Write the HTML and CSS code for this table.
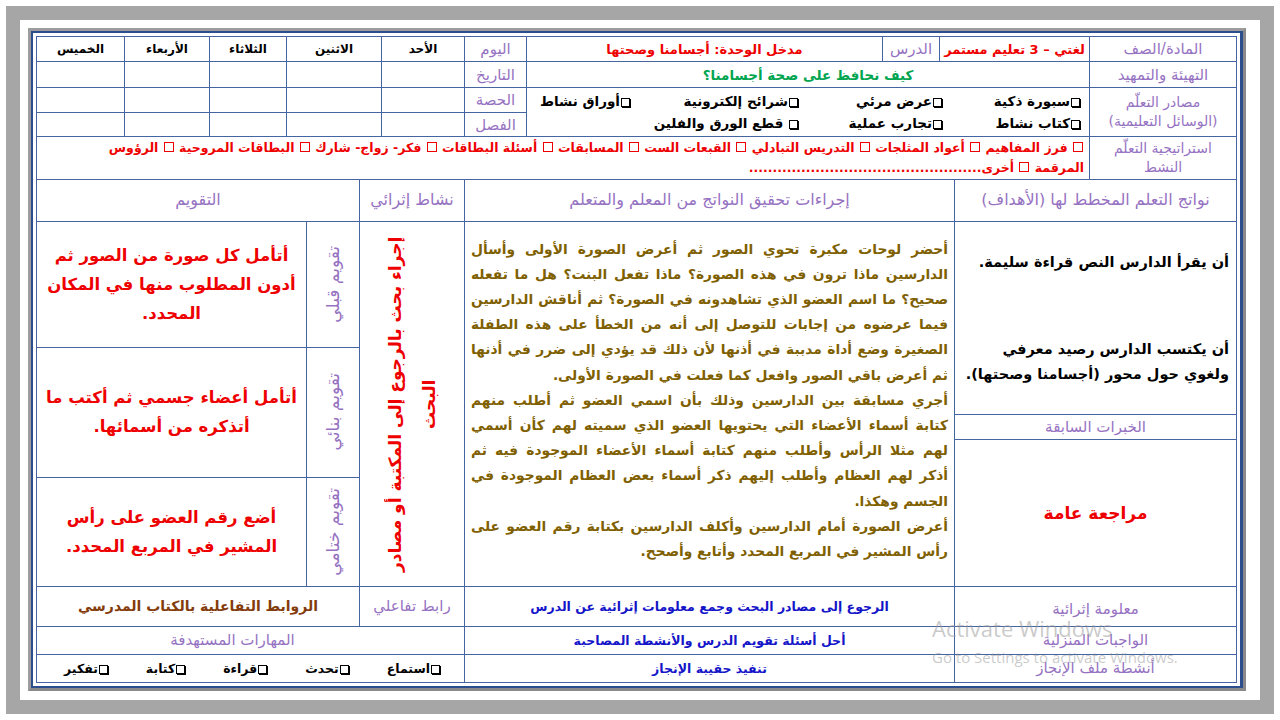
FILE: index.html
```html
<!DOCTYPE html>
<html lang="ar" dir="rtl">
<head>
<meta charset="utf-8">
<link rel="stylesheet" href="styles.css">
</head>
<body>
<div class="page">
  <div class="panel">
    <div class="frame">
      <div class="inner">
        <table class="top">
          <colgroup>
            <col class="c147"><col class="c150"><col class="c57"><col class="c356"><col class="c62">
            <col class="c83"><col class="c95"><col class="c77"><col class="c85"><col class="c88">
          </colgroup>
          <tr class="r25">
            <td class="lbl">المادة/الصف</td>
            <td class="red b">لغتي – 3 تعليم مستمر</td>
            <td class="lbl">الدرس</td>
            <td class="red b">مدخل الوحدة: أجسامنا وصحتها</td>
            <td class="lbl">اليوم</td>
            <td class="day">الأحد</td>
            <td class="day">الاثنين</td>
            <td class="day">الثلاثاء</td>
            <td class="day">الأربعاء</td>
            <td class="day">الخميس</td>
          </tr>
          <tr class="r26">
            <td class="lbl">التهيئة والتمهيد</td>
            <td colspan="3" class="green b">كيف نحافظ على صحة أجسامنا؟</td>
            <td class="lbl">التاريخ</td>
            <td></td><td></td><td></td><td></td><td></td>
          </tr>
          <tr class="r25">
            <td rowspan="2" class="lbl two">مصادر التعلّم<br>(الوسائل التعليمية)</td>
            <td rowspan="2" colspan="3" class="res">
              <div class="resgrid">
                <span><i class="cb"></i>سبورة ذكية</span>
                <span><i class="cb"></i>عرض مرئي</span>
                <span><i class="cb"></i>شرائح إلكترونية</span>
                <span><i class="cb"></i>أوراق نشاط</span>
                <span><i class="cb"></i>كتاب نشاط</span>
                <span><i class="cb"></i>تجارب عملية</span>
                <span><i class="cb"></i> قطع الورق والفلين</span>
              </div>
            </td>
            <td class="lbl">الحصة</td>
            <td></td><td></td><td></td><td></td><td></td>
          </tr>
          <tr class="r24">
            <td class="lbl">الفصل</td>
            <td></td><td></td><td></td><td></td><td></td>
          </tr>
          <tr class="r43">
            <td class="lbl two">استراتيجية التعلّم<br>النشط</td>
            <td colspan="9" class="strat">
              <div class="sline"><i class="rb"></i> فرز المفاهيم <i class="rb"></i> أعواد المثلجات <i class="rb"></i> التدريس التبادلي <i class="rb"></i> القبعات الست <i class="rb"></i> المسابقات <i class="rb"></i> أسئلة البطاقات <i class="rb"></i> فكر- زواج- شارك <i class="rb"></i> البطاقات المروحية <i class="rb"></i> الرؤوس</div>
              <div class="sline">المرقمة <i class="rb"></i> أخرى.................................................</div>
            </td>
          </tr>
        </table>

        <table class="main">
          <colgroup>
            <col class="c282"><col class="c490"><col class="c105"><col class="c53"><col class="c270">
          </colgroup>
          <tr class="h42">
            <td class="lbl hd">نواتج التعلم المخطط لها (الأهداف)</td>
            <td class="lbl hd">إجراءات تحقيق النواتج من المعلم والمتعلم</td>
            <td class="lbl hd">نشاط إثرائي</td>
            <td colspan="2" class="lbl hd">التقويم</td>
          </tr>
          <tr class="h126">
            <td rowspan="2" class="goals">
              <p>أن يقرأ الدارس النص قراءة سليمة.</p>
              <p class="g2">أن يكتسب الدارس رصيد معرفي<br>ولغوي حول محور (أجسامنا وصحتها).</p>
            </td>
            <td rowspan="5" class="proc">
              <div class="j">أحضر لوحات مكبرة تحوي الصور ثم أعرض الصورة الأولى وأسأل</div>
              <div class="j">الدارسين ماذا ترون في هذه الصورة؟ ماذا تفعل البنت؟ هل ما تفعله</div>
              <div class="j">صحيح؟ ما اسم العضو الذي تشاهدونه في الصورة؟ ثم أناقش الدارسين</div>
              <div class="j">فيما عرضوه من إجابات للتوصل إلى أنه من الخطأ على هذه الطفلة</div>
              <div class="j">الصغيرة وضع أداة مدببة في أذنها لأن ذلك قد يؤدي إلى ضرر في أذنها</div>
              <div>ثم أعرض باقي الصور وافعل كما فعلت في الصورة الأولى.</div>
              <div class="j">أجري مسابقة بين الدارسين وذلك بأن اسمي العضو ثم أطلب منهم</div>
              <div class="j">كتابة أسماء الأعضاء التي يحتويها العضو الذي سميته لهم كأن أسمي</div>
              <div class="j">لهم مثلا الرأس وأطلب منهم كتابة أسماء الأعضاء الموجودة فيه ثم</div>
              <div class="j">أذكر لهم العظام وأطلب إليهم ذكر أسماء بعض العظام الموجودة في</div>
              <div>الجسم وهكذا.</div>
              <div class="j">أعرض الصورة أمام الدارسين وأكلف الدارسين بكتابة رقم العضو على</div>
              <div>رأس المشير في المربع المحدد وأتابع وأصحح.</div>
            </td>
            <td rowspan="5" class="enr">
              <div class="vtext enrtext">إجراء بحث بالرجوع إلى المكتبة أو مصادر البحث</div>
            </td>
            <td class="vlab"><div class="vtext">تقويم قبلي</div></td>
            <td class="evl">أتأمل كل صورة من الصور ثم<br>أدون المطلوب منها في المكان<br>المحدد.</td>
          </tr>
          <tr class="h67">
            <td rowspan="3" class="vlab"><div class="vtext">تقويم بنائي</div></td>
            <td rowspan="3" class="evl">أتأمل أعضاء جسمي ثم أكتب ما<br>أتذكره من أسمائها.</td>
          </tr>
          <tr class="h25">
            <td class="lbl">الخبرات السابقة</td>
          </tr>
          <tr class="h38">
            <td rowspan="2" class="review">مراجعة عامة</td>
          </tr>
          <tr class="h109">
            <td class="vlab"><div class="vtext">تقويم ختامي</div></td>
            <td class="evl">أضع رقم العضو على رأس<br>المشير في المربع المحدد.</td>
          </tr>
          <tr class="h40">
            <td class="lbl low">معلومة إثرائية</td>
            <td class="blue">الرجوع إلى مصادر البحث وجمع معلومات إثرائية عن الدرس</td>
            <td class="lbl">رابط تفاعلي</td>
            <td colspan="2" class="brown">الروابط التفاعلية بالكتاب المدرسي</td>
          </tr>
          <tr class="h28">
            <td class="lbl">الواجبات المنزلية</td>
            <td class="blue">أحل أسئلة تقويم الدرس والأنشطة المصاحبة</td>
            <td colspan="3" class="lbl skl">المهارات المستهدفة</td>
          </tr>
          <tr class="h28">
            <td class="lbl">أنشطة ملف الإنجاز</td>
            <td class="blue">تنفيذ حقيبة الإنجاز</td>
            <td colspan="3" class="skills">
              <div class="skrow">
                <span><i class="cb"></i>استماع</span>
                <span><i class="cb"></i>تحدث</span>
                <span><i class="cb"></i>قراءة</span>
                <span><i class="cb"></i>كتابة</span>
                <span><i class="cb"></i>تفكير</span>
              </div>
            </td>
          </tr>
        </table>
      </div>
    </div>
  </div>
  <div class="watermark" dir="ltr">
    <div class="wm1">Activate Windows</div>
    <div class="wm2">Go to Settings to activate Windows.</div>
  </div>
</div>
</body>
</html>
```

FILE: styles.css
```css
html, body {
  margin: 0;
  padding: 0;
  background: #ffffff;
}
body {
  width: 1280px;
  height: 720px;
  overflow: hidden;
  font-family: "DejaVu Sans", "Liberation Sans", sans-serif;
}
.page {
  position: relative;
  margin: 6px;
  width: 1268px;
  height: 708px;
  box-sizing: border-box;
  padding: 14px;
  background: #a6a6a6;
}
.panel {
  width: 1240px;
  height: 680px;
  box-sizing: border-box;
  background: #ffffff;
  padding: 8px 14px 9px 8px;
}
.frame {
  border: 3px solid #9c9c9c;
  border-right-color: #8a8a8a;
  border-bottom-color: #8a8a8a;
}
.inner {
  border: 2px solid #2c4d8e;
  border-right-width: 3px;
  padding: 3px;
  background: #fff;
}
table {
  width: 1201px;
  border-collapse: collapse;
  table-layout: fixed;
}
td {
  border: 1px solid #4565a2;
  padding: 0;
  text-align: center;
  vertical-align: middle;
  overflow: hidden;
  white-space: nowrap;
}
.main tr:first-child td { border-top: none; }

.c147 { width: 147px; } .c150 { width: 150px; } .c57 { width: 57px; } .c356 { width: 356px; }
.c62 { width: 62px; } .c83 { width: 83px; } .c95 { width: 95px; } .c77 { width: 77px; }
.c85 { width: 85px; } .c88 { width: 88px; }
.c282 { width: 282px; } .c490 { width: 490px; } .c105 { width: 105px; } .c53 { width: 53px; } .c270 { width: 270px; }

.r25 { height: 25px; } .r26 { height: 26px; } .r24 { height: 24px; } .r43 { height: 43px; }
.h42 { height: 41px; } .h126 { height: 126px; } .h67 { height: 67px; } .h25 { height: 25px; }
.h38 { height: 38px; } .h109 { height: 109px; } .h40 { height: 40px; } .h28 { height: 28px; }

.lbl {
  color: #9672c2;
  font-size: 15px;
  line-height: 18px;
}
.lbl.two { line-height: 19px; font-size: 14px; }
.lbl.hd { font-size: 16px; }
.lbl.low { padding-top: 6px; }
.lbl.skl { padding-right: 36px; }
.b { font-weight: bold; }
.red { color: #ee0000; font-size: 13px; }
.green { color: #00a550; font-size: 13.5px; }
.day { font-weight: bold; font-size: 12px; color: #000; }

.res { padding: 0 9px 0 0; }
.resgrid {
  display: grid;
  grid-template-columns: 138px 144px 168px 1fr;
  row-gap: 6px;
  text-align: right;
  font-weight: bold;
  font-size: 13.5px;
  color: #000;
}
.cb {
  display: inline-block;
  width: 7px;
  height: 7px;
  border: 1.5px solid #000;
  box-shadow: 1px 1px 0 #000;
  vertical-align: -1px;
  margin-left: 1px;
}
.strat {
  text-align: right;
  padding: 0 5px;
  color: #ee0000;
  font-weight: bold;
  font-size: 12.5px;
  line-height: 20px;
}
.rb {
  display: inline-block;
  width: 8px;
  height: 8px;
  border: 1.5px solid #ee0000;
  vertical-align: 0;
  margin: 0 1px;
}

.goals {
  vertical-align: top;
  text-align: right;
  padding: 28px 7px 0 0;
  font-weight: bold;
  font-size: 14.5px;
  line-height: 25px;
  color: #000;
}
.goals p { margin: 0; }
.goals .g2 { margin-top: 62px; }

.proc {
  vertical-align: top;
  padding: 15px 6px 0 6px;
  font-weight: bold;
  font-size: 13.8px;
  line-height: 25.2px;
  color: #7f6000;
  text-align: right;
}
.proc .j {
  text-align: justify;
  text-align-last: justify;
}

.vtext {
  writing-mode: vertical-rl;
  transform: rotate(180deg);
  margin: 0 auto;
}
.enr { vertical-align: middle; }
.enrtext {
  height: 352px;
  color: #ee0000;
  font-weight: bold;
  font-size: 17px;
  line-height: 34px;
  white-space: normal;
}
.vlab .vtext {
  color: #9672c2;
  font-size: 17px;
  text-align: center;
}
.evl {
  color: #ee0000;
  font-weight: bold;
  font-size: 16.5px;
  line-height: 29px;
}
.review {
  color: #ee0000;
  font-weight: bold;
  font-size: 17px;
}
.blue {
  color: #1414c8;
  font-weight: bold;
  font-size: 12.5px;
}
.brown {
  color: #843c0c;
  font-weight: bold;
  font-size: 14px;
}
.skills { padding: 0 24px 0 0; }
.skrow {
  display: flex;
  gap: 38px;
  font-weight: bold;
  font-size: 12.5px;
  color: #000;
}

.watermark {
  position: absolute;
  left: 926px;
  top: 609px;
  color: rgba(150, 150, 150, 0.5);
  font-family: "Open Sans", "Liberation Sans", sans-serif;
  pointer-events: none;
}
.wm1 { font-size: 22px; line-height: 26px; }
.wm2 { font-size: 15px; line-height: 20px; margin-top: 6px; }
```
